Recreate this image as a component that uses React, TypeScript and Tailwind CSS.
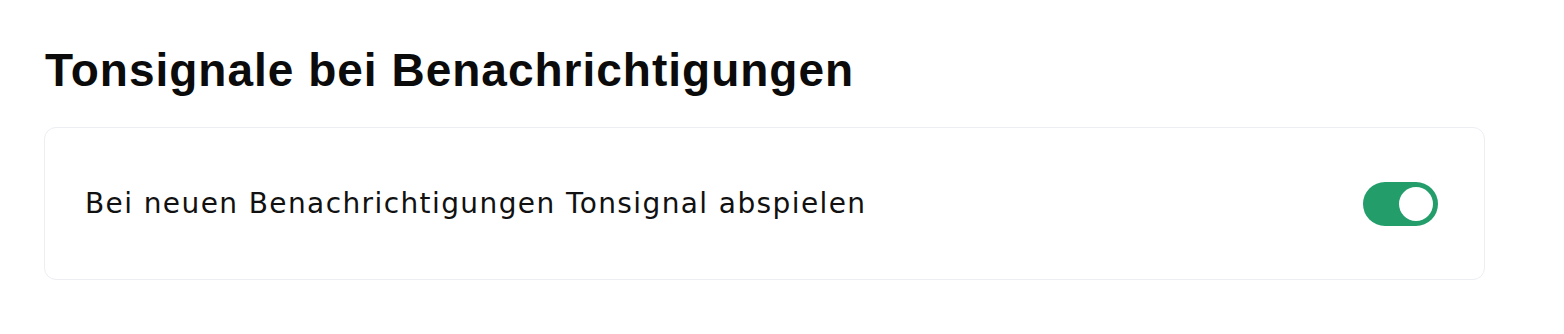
export default function App() {
  return (
    <div className="min-h-[334px] w-full bg-white pl-[44px] pr-[79px] pt-[40px]">
      <h2 className="pl-[1px] font-['Liberation_Sans',Arial,sans-serif] text-[46px] font-bold leading-[60px] tracking-[1px] text-[#0b0b0b]">
        Tonsignale bei Benachrichtigungen
      </h2>
      <div className="mt-[27px] flex h-[153px] items-center justify-between rounded-[12px] border border-[#eceef3] bg-white pl-[40px] pr-[46px]">
        <span className="font-['DejaVu_Sans',sans-serif] text-[28px] tracking-[1.4px] text-[#111111]">
          Bei neuen Benachrichtigungen Tonsignal abspielen
        </span>
        <button
          type="button"
          aria-label="Tonsignal abspielen"
          className="flex h-[44px] w-[75px] items-center justify-end rounded-full bg-[#239e6a] pr-[5px]"
        >
          <span className="h-[34px] w-[34px] rounded-full bg-white" />
        </button>
      </div>
    </div>
  );
}
